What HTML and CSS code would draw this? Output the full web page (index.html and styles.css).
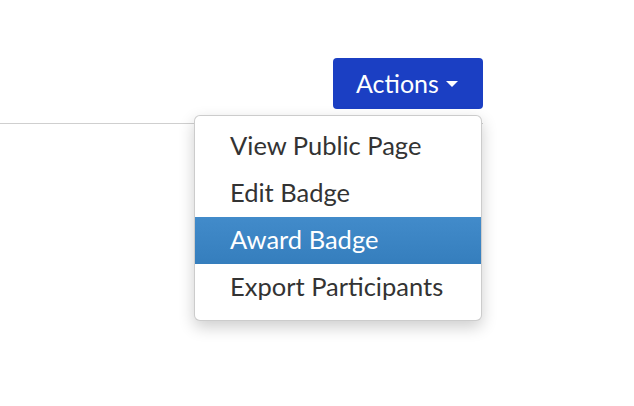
FILE: index.html
```html
<!DOCTYPE html>
<html>
<head>
<meta charset="utf-8">
<link rel="stylesheet" href="styles.css">
</head>
<body>
<div class="page">
  <div class="toolbar">
    <div class="actions">
      <button class="btn">Actions <span class="caret"></span></button>
      <ul class="menu">
        <li class="item">View Public Page</li>
        <li class="item">Edit Badge</li>
        <li class="item active">Award Badge</li>
        <li class="item">Export Participants</li>
      </ul>
    </div>
  </div>
  <div class="rule"></div>
</div>
</body>
</html>
```

FILE: styles.css
```css
html, body {
  margin: 0;
  padding: 0;
  background: #fff;
  font-family: Lato, "Liberation Sans", sans-serif;
}
body {
  min-height: 406px;
}
.page {
  padding-top: 58px;
  width: 483px;
  min-height: 348px;
}
.toolbar {
  display: flex;
  justify-content: flex-end;
}
.actions {
  position: relative;
  z-index: 2;
}
.btn {
  display: flex;
  align-items: center;
  gap: 7px;
  height: 51px;
  width: 150px;
  padding: 0 0 2px 23px;
  border: none;
  border-radius: 4px;
  background: #1b3fc3;
  color: #fff;
  font-family: Lato, "Liberation Sans", sans-serif;
  font-size: 25px;
  box-sizing: border-box;
}
.caret {
  width: 0;
  height: 0;
  border-left: 6px solid transparent;
  border-right: 6px solid transparent;
  border-top: 6px solid #fff;
  margin-top: 2px;
}
.rule {
  height: 1px;
  background: #cfcfcf;
  margin-top: 14px;
}
.menu {
  position: absolute;
  top: 57px;
  right: 1px;
  width: 288px;
  box-sizing: border-box;
  margin: 0;
  padding: 7px 0 9px;
  list-style: none;
  background: #fff;
  border: 1px solid rgba(0,0,0,0.2);
  border-radius: 6px;
  box-shadow: 0 6px 16px rgba(0,0,0,0.2);
}
.item {
  height: 47px;
  line-height: 45px;
  padding-left: 35px;
  font-size: 25.5px;
  color: #333;
}
.item.active {
  color: #fff;
  background: linear-gradient(to bottom, #428bca 0, #357ebd 100%);
}
```
